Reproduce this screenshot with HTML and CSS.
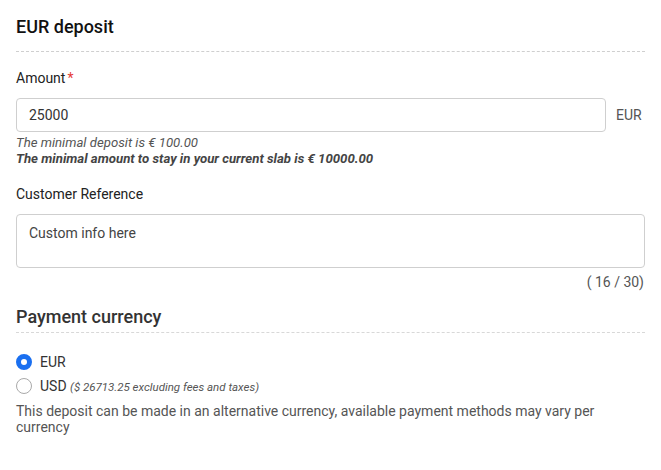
FILE: index.html
```html
<!DOCTYPE html>
<html lang="en">
<head>
<meta charset="utf-8">
<title>EUR deposit</title>
<link rel="stylesheet" href="styles.css">
</head>
<body>
<main class="page">
  <h2 class="section-title">EUR deposit</h2>

  <div class="field">
    <label class="label">Amount<span class="req">*</span></label>
    <div class="input-row">
      <div class="input">25000</div>
      <span class="unit">EUR</span>
    </div>
    <p class="hint">The minimal deposit is € 100.00</p>
    <p class="hint strong">The minimal amount to stay in your current slab is € 10000.00</p>
  </div>

  <div class="field field-ref">
    <label class="label">Customer Reference</label>
    <div class="textarea">Custom info here</div>
    <div class="counter">( 16 / 30)</div>
  </div>

  <h3 class="sub-title">Payment currency</h3>

  <div class="radios">
    <div class="radio-row">
      <span class="radio checked"></span>
      <span class="radio-label">EUR</span>
    </div>
    <div class="radio-row">
      <span class="radio"></span>
      <span class="radio-label">USD <em class="note">($ 26713.25 excluding fees and taxes)</em></span>
    </div>
  </div>
  <p class="desc">This deposit can be made in an alternative currency, available payment methods may vary per currency</p>
</main>
</body>
</html>
```

FILE: styles.css
```css
* { box-sizing: border-box; }
html, body { margin: 0; padding: 0; background: #fff; }
body {
  font-family: Roboto, "Noto Sans", Arial, sans-serif;
  color: #333;
  font-size: 14px;
}
.page {
  padding: 0 16px;
  width: 661px;
}
.section-title {
  margin: 0;
  padding: 16px 0 13px;
  font-size: 18px;
  line-height: 22px;
  font-weight: 500;
  color: #111;
  border-bottom: 1px dashed #cfcfcf;
}
.field { margin-top: 16px; }
.label {
  display: block;
  font-size: 14px;
  line-height: 20px;
  color: #222;
  margin-bottom: 10px;
}
.req { color: #e53935; margin-left: 2px; }
.input-row {
  display: flex;
  align-items: center;
  gap: 10px;
}
.input {
  flex: 0 0 590px;
  height: 34px;
  border: 1px solid #cfcfcf;
  border-radius: 4px;
  padding: 0 12px;
  display: flex;
  align-items: center;
  font-size: 14px;
  color: #333;
}
.unit { font-size: 14px; color: #555; }
.hint {
  margin: 0;
  font-size: 13.2px;
  line-height: 16px;
  font-style: italic;
  color: #555;
}
.hint:first-of-type { margin-top: 3px; }
.hint.strong { font-weight: 700; color: #444; }
.field-ref { margin-top: 17px; }
.textarea {
  height: 54px;
  border: 1px solid #cfcfcf;
  border-radius: 4px;
  padding: 9px 12px;
  font-size: 14px;
  line-height: 18px;
  color: #444;
}
.counter {
  margin-top: 6px;
  text-align: right;
  font-size: 14px;
  line-height: 16px;
  color: #555;
  padding-right: 1px;
}
.sub-title {
  margin: 16px 0 0;
  padding-bottom: 4px;
  font-size: 18px;
  line-height: 22px;
  font-weight: 500;
  color: #333;
  border-bottom: 1px dashed #d8d8d8;
}
.radios {
  margin-top: 21px;
  display: flex;
  flex-direction: column;
  gap: 8px;
}
.radio-row {
  display: flex;
  align-items: center;
  gap: 8px;
  height: 16px;
}
.radio {
  width: 16px;
  height: 16px;
  border-radius: 50%;
  border: 1px solid #a9a9a9;
  background: #fff;
  flex: none;
}
.radio.checked {
  border: 5px solid #1a6ff0;
}
.radio-label { font-size: 14px; color: #333; }
.note { font-size: 11.5px; color: #555; }
.desc {
  margin: 9px 0 0;
  font-size: 14px;
  line-height: 16px;
  color: #555;
}
```
